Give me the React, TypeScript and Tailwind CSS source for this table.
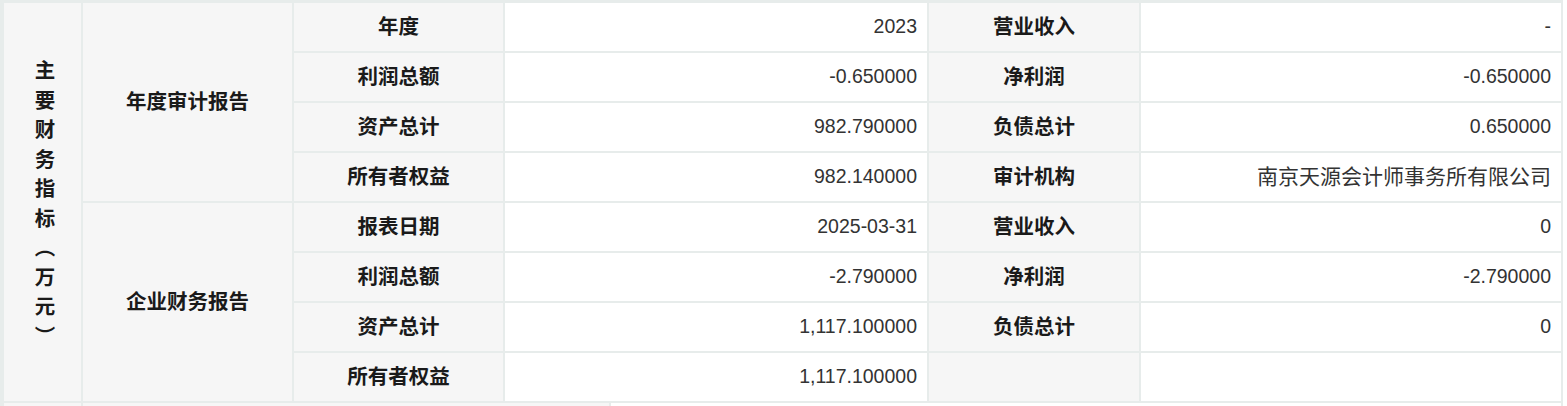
import React from "react";

type Row = [string, string, string, string];

const annual: Row[] = [
  ["年度", "2023", "营业收入", "-"],
  ["利润总额", "-0.650000", "净利润", "-0.650000"],
  ["资产总计", "982.790000", "负债总计", "0.650000"],
  ["所有者权益", "982.140000", "审计机构", "南京天源会计师事务所有限公司"],
];

const company: Row[] = [
  ["报表日期", "2025-03-31", "营业收入", "0"],
  ["利润总额", "-2.790000", "净利润", "-2.790000"],
  ["资产总计", "1,117.100000", "负债总计", "0"],
  ["所有者权益", "1,117.100000", "", ""],
];

const label =
  "bg-[#f6f6f6] flex items-center justify-center text-[20.5px] font-bold text-[#1a1a1a]";
const value =
  "bg-white flex items-center justify-end pr-[10px] text-[19.5px] text-[#333333]";

// CJK values read a bit larger than the digits
const isCjk = (s: string) => /[\u4e00-\u9fff]/.test(s);

function Rows({ rows }: { rows: Row[] }) {
  return (
    <>
      {rows.map((r, i) => (
        <React.Fragment key={i}>
          <div className={label + " col-start-3"}>{r[0]}</div>
          <div className={value}>{r[1]}</div>
          <div className={label}>{r[2]}</div>
          <div className={value}>
            {isCjk(r[3]) ? <span className="text-[21px]">{r[3]}</span> : r[3]}
          </div>
        </React.Fragment>
      ))}
    </>
  );
}

export default function App() {
  return (
    <div
      className="w-[1567px] h-[406px] overflow-hidden bg-white"
      style={{ fontFamily: '"Liberation Sans", "Noto Sans CJK SC", sans-serif' }}
    >
      <div className="w-[1563px] bg-[#e7eceb] pt-[3px] pl-[4px] pr-[2px]">
        <div className="grid grid-cols-[77px_209px_209px_422px_210px_420px] grid-rows-[repeat(8,48px)] gap-[2px]">
          <div className={label + " row-span-8"}>
            <span className="[writing-mode:vertical-rl] tracking-[9px] pt-[10px]">主要财务指标（万元）</span>
          </div>
          <div className={label + " row-start-1 row-span-4 col-start-2"}>年度审计报告</div>
          <Rows rows={annual} />
          <div className={label + " row-start-5 row-span-4 col-start-2"}>企业财务报告</div>
          <Rows rows={company} />
        </div>
        <div className="grid grid-cols-[77px_526px_950px] gap-[2px] pt-[2px] h-[10px]">
          <div className="bg-[#f6f6f6]" />
          <div className="bg-[#f6f6f6]" />
          <div className="bg-white" />
        </div>
      </div>
    </div>
  );
}
